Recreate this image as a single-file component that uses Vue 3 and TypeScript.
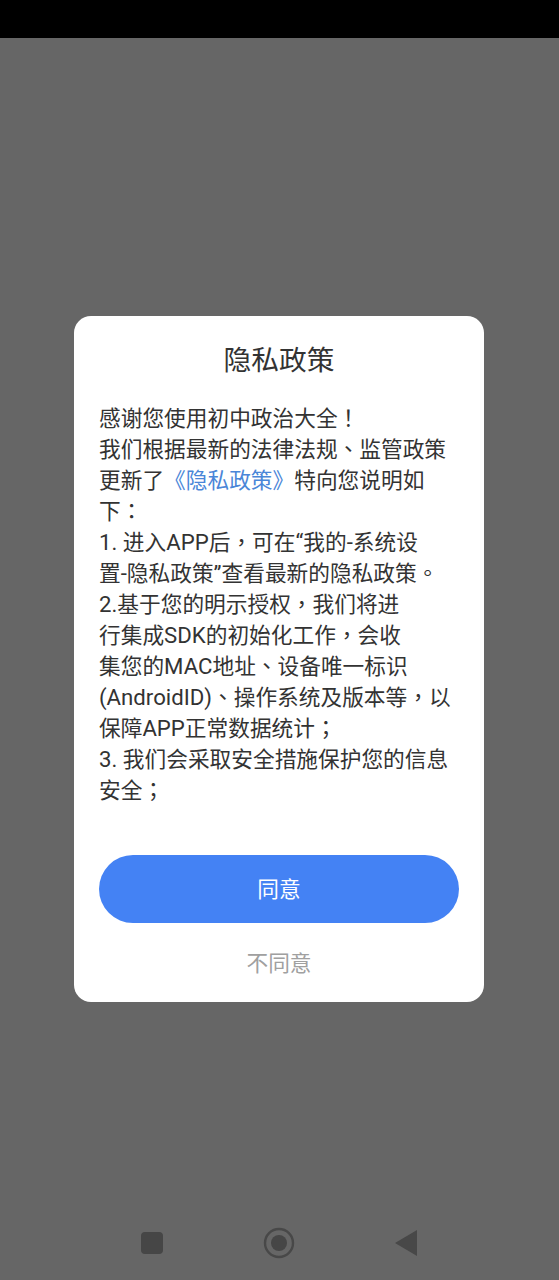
<script setup lang="ts">
type Kind = 'punct' | 'latin' | 'cjk'
interface Seg { t: string; kind: Kind }
interface Line { segs: Seg[]; link: Seg[]; after: Seg[] }

const kindOf = (t: string): Kind => {
  if (/^[！，：；、。]+$/.test(t)) return 'punct'
  if (/^[\x20-\x7e“”]+$/.test(t)) return 'latin'
  return 'cjk'
}

const split = (s: string): Seg[] =>
  s
    .split(/([！，：；、。]|[\x20-\x7e“”]+)/)
    .filter(Boolean)
    .map((t) => ({ t, kind: kindOf(t) }))

const mk = (a: string, link = '', after = ''): Line => ({ segs: split(a), link: split(link), after: split(after) })

const lines: Line[] = [
  mk('感谢您使用初中政治大全！'),
  mk('我们根据最新的法律法规、监管政策'),
  mk('更新了', '《隐私政策》', '特向您说明如'),
  mk('下：'),
  mk('1. 进入APP后，可在“我的-系统设'),
  mk('置-隐私政策”查看最新的隐私政策。'),
  mk('2.基于您的明示授权，我们将进'),
  mk('行集成SDK的初始化工作，会收'),
  mk('集您的MAC地址、设备唯一标识'),
  mk('(AndroidID)、操作系统及版本等，以'),
  mk('保障APP正常数据统计；'),
  mk('3. 我们会采取安全措施保护您的信息'),
  mk('安全；'),
]
</script>

<template>
  <div class="screen">
    <div class="status"></div>
    <main class="main">
      <section class="card">
        <h1 class="title">隐私政策</h1>
        <div class="body">
          <div v-for="(l, i) in lines" :key="i" class="line">
            <span v-for="(s, j) in l.segs" :key="j" :class="s.kind">{{ s.t }}</span>
            <span v-for="(s, j) in l.link" :key="'l' + j" class="link">{{ s.t }}</span>
            <span v-for="(s, j) in l.after" :key="'a' + j" :class="s.kind">{{ s.t }}</span>
          </div>
        </div>
        <button class="agree">同意</button>
        <button class="decline">不同意</button>
      </section>
    </main>
    <nav class="nav">
      <svg class="ico-square" width="24" height="24" viewBox="0 0 24 24"><rect x="1" y="1" width="22" height="22" rx="4" fill="#464646" /></svg>
      <svg class="ico-home" width="32" height="32" viewBox="0 0 32 32"><circle cx="16" cy="16" r="14" fill="none" stroke="#484848" stroke-width="2.4" /><circle cx="16" cy="16" r="8" fill="#464646" /></svg>
      <svg class="ico-back" width="24" height="28" viewBox="0 0 24 28"><path d="M23 1V27L1 14Z" fill="#484848" /></svg>
    </nav>
  </div>
</template>

<style scoped>
.screen {
  position: relative;
  width: 559px;
  height: 1280px;
  display: flex;
  flex-direction: column;
  background: #666666;
  font-family: Roboto, "Noto Sans CJK SC", sans-serif;
  overflow: hidden;
}
.status {
  height: 38px;
  flex: none;
  background: #000;
}
.main {
  flex: 1;
  display: flex;
  align-items: center;
  justify-content: center;
  padding-right: 1px;
}
.card {
  width: 410px;
  height: 686px;
  box-sizing: border-box;
  background: #fff;
  border-radius: 17px;
  padding: 23px 25px 0;
  display: flex;
  flex-direction: column;
  align-items: stretch;
}
.title {
  margin: 0;
  height: 44px;
  font-size: 27.7px;
  font-weight: 400;
  line-height: 44px;
  text-align: center;
  color: #333;
}
.body {
  margin-top: 20px;
  height: 441px;
  font-size: 21.7px;
  line-height: 31px;
  color: #333;
}
.line {
  height: 31px;
  white-space: nowrap;
}
.punct {
  font-family: "Noto Sans CJK TC", sans-serif;
  line-height: 0;
}
.latin {
  font-size: 22.2px;
  line-height: 0;
}
.link {
  color: #4a86d8;
}
.agree {
  margin-top: 11px;
  width: 360px;
  height: 68px;
  flex: none;
  border: 0;
  border-radius: 34px;
  padding: 0 0 4px;
  background: #4482f4;
  color: #fff;
  font: inherit;
  font-size: 21.7px;
}
.decline {
  margin-top: 18px;
  height: 44px;
  flex: none;
  border: 0;
  padding: 0 0 4px;
  background: none;
  color: #a0a0a0;
  font: inherit;
  font-size: 21.7px;
}
.nav {
  position: absolute;
  left: 0;
  right: 0;
  bottom: 20px;
  height: 34px;
}
.nav svg {
  position: absolute;
}
.ico-square { left: 140px; top: 5px; }
.ico-home { left: 263px; top: 1px; }
.ico-back { left: 394px; top: 3px; }
</style>
